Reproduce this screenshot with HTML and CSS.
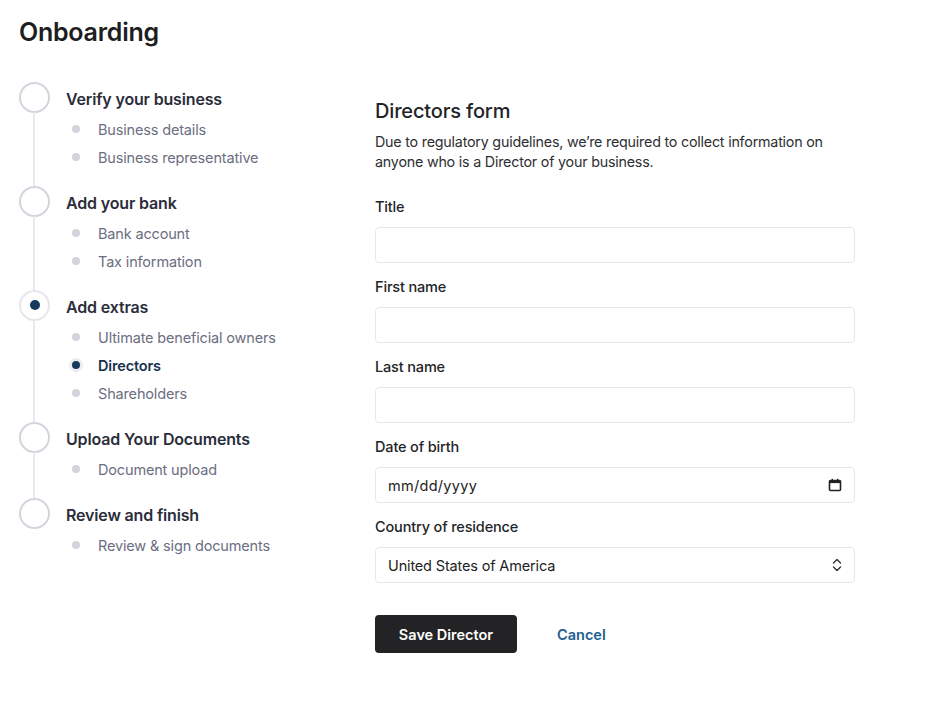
FILE: index.html
```html
<!DOCTYPE html>
<html lang="en">
<head>
<meta charset="utf-8">
<title>Onboarding</title>
<link rel="stylesheet" href="styles.css">
</head>
<body>
<div class="page">
  <h1 class="page-title">Onboarding</h1>
  <div class="layout">
    <nav class="steps">
      <div class="step">
        <div class="step-head"><span class="circle"></span><span class="step-title">Verify your business</span></div>
        <ul class="subs">
          <li><span class="dot"></span>Business details</li>
          <li><span class="dot"></span>Business representative</li>
        </ul>
      </div>
      <div class="step">
        <div class="step-head"><span class="circle"></span><span class="step-title">Add your bank</span></div>
        <ul class="subs">
          <li><span class="dot"></span>Bank account</li>
          <li><span class="dot"></span>Tax information</li>
        </ul>
      </div>
      <div class="step">
        <div class="step-head"><span class="circle active"></span><span class="step-title">Add extras</span></div>
        <ul class="subs">
          <li><span class="dot"></span>Ultimate beneficial owners</li>
          <li class="current"><span class="dot"></span>Directors</li>
          <li><span class="dot"></span>Shareholders</li>
        </ul>
      </div>
      <div class="step">
        <div class="step-head"><span class="circle"></span><span class="step-title">Upload Your Documents</span></div>
        <ul class="subs">
          <li><span class="dot"></span>Document upload</li>
        </ul>
      </div>
      <div class="step last">
        <div class="step-head"><span class="circle"></span><span class="step-title">Review and finish</span></div>
        <ul class="subs">
          <li><span class="dot"></span>Review &amp; sign documents</li>
        </ul>
      </div>
    </nav>
    <main class="form-area">
      <h2 class="form-title">Directors form</h2>
      <p class="form-desc">Due to regulatory guidelines, we’re required to collect information on anyone who is a Director of your business.</p>
      <form class="form">
        <label class="field"><span class="label">Title</span><input class="input" type="text"></label>
        <label class="field"><span class="label">First name</span><input class="input" type="text"></label>
        <label class="field"><span class="label">Last name</span><input class="input" type="text"></label>
        <label class="field"><span class="label">Date of birth</span>
          <span class="input fake">
            <span class="date-text">mm/dd/yyyy</span>
            <svg class="cal" width="14" height="14" viewBox="0 0 14 14"><rect x="1.5" y="2.5" width="11" height="10" rx="1" fill="none" stroke="#222" stroke-width="1.6"/><rect x="1.5" y="2.5" width="11" height="2.6" fill="#222"/><rect x="3.6" y="0.8" width="1.4" height="2.4" fill="#222"/><rect x="9" y="0.8" width="1.4" height="2.4" fill="#222"/></svg>
          </span>
        </label>
        <label class="field"><span class="label">Country of residence</span>
          <span class="input fake">
            <span class="select-text">United States of America</span>
            <svg class="chev" width="10" height="16" viewBox="0 0 10 16"><path d="M1.5 6 L5 2.5 L8.5 6" fill="none" stroke="#333" stroke-width="1.4" stroke-linecap="round" stroke-linejoin="round"/><path d="M1.5 10 L5 13.5 L8.5 10" fill="none" stroke="#333" stroke-width="1.4" stroke-linecap="round" stroke-linejoin="round"/></svg>
          </span>
        </label>
        <div class="actions">
          <button type="button" class="btn-primary">Save Director</button>
          <button type="button" class="btn-link">Cancel</button>
        </div>
      </form>
    </main>
  </div>
</div>
</body>
</html>
```

FILE: styles.css
```css
* { box-sizing: border-box; }
html, body { margin: 0; padding: 0; background: #fff; }
body {
  font-family: Inter, "Noto Sans", "Liberation Sans", sans-serif;
  color: #2a2c37;
  letter-spacing: -0.01em;
}
.page { padding: 16px 19px; }
.page-title {
  margin: 0;
  font-size: 25px;
  font-weight: 600;
  color: #1d1e22;
  line-height: 32px;
  letter-spacing: -0.01em;
}
.layout {
  display: flex;
  margin-top: 34px;
}
.steps { width: 356px; flex: none; }
.step { position: relative; padding-bottom: 15px; }
.step::before {
  content: "";
  position: absolute;
  left: 14px;
  top: 30px;
  bottom: -2px;
  width: 2px;
  background: #e8e9ee;
}
.step.last::before { display: none; }
.step-head { display: flex; align-items: center; height: 30px; }
.circle {
  width: 31px; height: 31px;
  border: 2px solid #d3d5de;
  border-radius: 50%;
  flex: none;
  display: flex; align-items: center; justify-content: center;
  background: #fff;
}
.circle.active { border-color: #e6e7ec; }
.circle.active::after {
  content: "";
  width: 10px; height: 10px; border-radius: 50%;
  background: #163a5e;
}
.step-title {
  margin-left: 16px;
  font-size: 16px;
  font-weight: 600;
  color: #2b2d3b;
  position: relative; top: 2px;
}
.subs { list-style: none; margin: 0; padding: 3px 0 0 0; }
.subs li {
  display: flex; align-items: center;
  height: 28px;
  font-size: 14.5px;
  color: #6b6e80;
  padding-left: 53px;
}
.dot {
  width: 8px; height: 8px; border-radius: 50%;
  background: #d2d4dc;
  margin-right: 18px;
  flex: none;
}
.subs li.current { color: #16324f; font-weight: 600; }
.subs li.current .dot {
  background: #163a5e;
  box-shadow: 0 0 0 3px #ededf1;
}
.form-area { width: 480px; padding-top: 15px; }
.form-title {
  margin: 0;
  font-size: 20px;
  font-weight: 500;
  color: #232427;
  line-height: 28px;
}
.form-desc {
  margin: 7px 0 0 0;
  font-size: 14.3px;
  line-height: 20px;
  color: #2e2f33;
  letter-spacing: -0.015em;
}
.form { margin-top: 25px; display: flex; flex-direction: column; }
.field { display: flex; flex-direction: column; margin-bottom: 14px; }
.label {
  font-size: 14.5px;
  font-weight: 500;
  color: #232427;
  line-height: 20px;
  margin-bottom: 10px;
}
.input {
  height: 36px;
  width: 100%;
  border: 1px solid #e6e7eb;
  border-radius: 4px;
  background: #fff;
  font: inherit;
  font-size: 14.5px;
  color: #222;
  padding: 0 12px;
  outline: none;
}
.fake { display: flex; align-items: center; justify-content: space-between; }
.date-text { letter-spacing: 0.02em; }
.actions { display: flex; align-items: center; margin-top: 18px; }
.btn-primary {
  width: 142px; height: 38px;
  background: #232325;
  color: #fff;
  border: none;
  border-radius: 4px;
  font: inherit;
  font-size: 14.5px;
  font-weight: 600;
  cursor: pointer;
}
.btn-link {
  margin-left: 26px;
  background: none; border: none;
  font: inherit;
  font-size: 14.5px;
  font-weight: 600;
  color: #1f5e8e;
  padding: 0 14px;
  cursor: pointer;
}
```
